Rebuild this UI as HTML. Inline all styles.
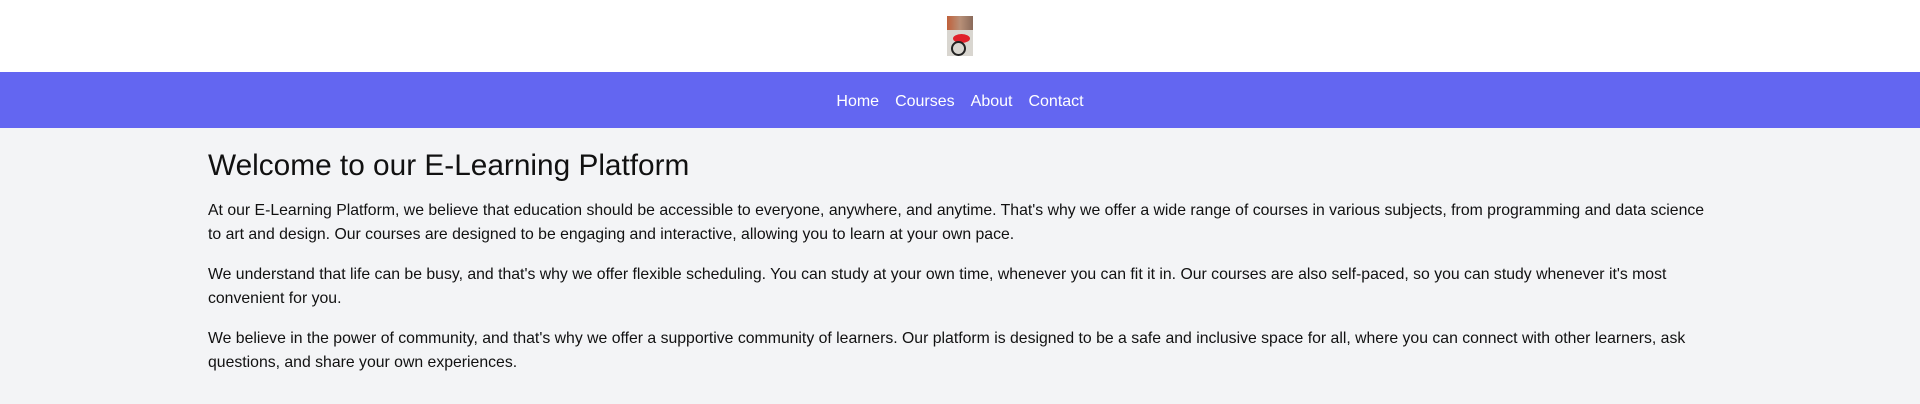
<!DOCTYPE html>
<html><head><style>
body{margin:0;background:#f3f4f6;font-family:"Liberation Sans",sans-serif;color:#111;width:1920px;height:404px;overflow:hidden}
header{background:#fff;height:72px;position:relative}
.img{position:absolute;left:947px;top:16px;width:26px;height:40px;background:linear-gradient(90deg,#c0603a 0,#b89078 50%,#8a6a5a 100%)}
.img i{position:absolute;left:0;top:14px;width:26px;height:26px;background:#d9d6d0}
.img b{position:absolute;left:6px;top:18px;width:17px;height:9px;background:#e0202a;border-radius:50%}
.img u{position:absolute;left:4px;top:25px;width:11px;height:11px;border:2px solid #222;border-radius:50%}
nav{background:#6366f1;height:56px;display:flex;justify-content:center;align-items:center;padding-top:3px;box-sizing:border-box}
nav a{color:#fff;text-decoration:none;font-size:16px;margin:0 8px}
main{width:1504px;margin:0 auto;padding:0}
h1{font-weight:normal;font-size:29.8px;margin:0;padding-top:20px;line-height:36px}
p{font-size:15.8px;line-height:24px;margin:15px 0 0;white-space:nowrap}
p+p{margin-top:16px}
</style></head><body>
<header><div class="img"><i></i><b></b><u></u></div></header>
<nav><a>Home</a><a>Courses</a><a>About</a><a>Contact</a></nav>
<main>
<h1>Welcome to our E-Learning Platform</h1>
<p>At our E-Learning Platform, we believe that education should be accessible to everyone, anywhere, and anytime. That's why we offer a wide range of courses in various subjects, from programming and data science<br>to art and design. Our courses are designed to be engaging and interactive, allowing you to learn at your own pace.</p>
<p>We understand that life can be busy, and that's why we offer flexible scheduling. You can study at your own time, whenever you can fit it in. Our courses are also self-paced, so you can study whenever it's most<br>convenient for you.</p>
<p>We believe in the power of community, and that's why we offer a supportive community of learners. Our platform is designed to be a safe and inclusive space for all, where you can connect with other learners, ask<br>questions, and share your own experiences.</p>
</main>
</body></html>
